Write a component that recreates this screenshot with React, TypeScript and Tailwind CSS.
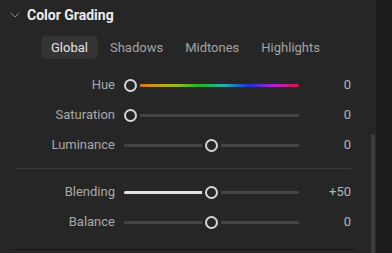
import { ChevronDown } from "lucide-react";

const HUE =
  "linear-gradient(to right, hsl(0 70% 48%), hsl(40 80% 45%), hsl(70 75% 42%), hsl(120 65% 42%), hsl(180 65% 42%), hsl(235 75% 48%), hsl(290 70% 48%), hsl(350 75% 45%))";

interface SliderProps {
  label: string;
  value: string;
  pos: number; // 0..1
  fill?: boolean;
  hue?: boolean;
}

function SliderRow({ label, value, pos, fill, hue }: SliderProps) {
  const trackW = 175;
  const center = 6.5 + pos * (trackW - 13);
  return (
    <div className="flex h-[30px] items-center">
      <div className="w-[115px] text-right text-[13px] text-[#a9a9a9]">{label}</div>
      <div className="relative ml-[9px] h-[13px] w-[175px]">
        <div
          className="absolute left-0 right-0 top-[5px] h-[3px] rounded-full bg-[#454545]"
          style={hue ? { backgroundImage: HUE } : undefined}
        />
        {fill && (
          <div
            className="absolute left-0 top-[5px] h-[3px] rounded-full bg-[#e2e2e2]"
            style={{ width: center }}
          />
        )}
        <div
          className="absolute top-0 h-[13px] w-[13px] rounded-full border-2 border-[#d6d6d6] bg-[#262626] shadow-[0_0_0_3px_#262626]"
          style={{ left: center - 6.5 }}
        />
      </div>
      <div className="w-[52px] text-right text-[13px] text-[#b4b4b4]">{value}</div>
    </div>
  );
}

export default function App() {
  return (
    <div className="flex h-[253px] w-[392px] overflow-hidden font-['Roboto',sans-serif]">
      <div className="relative flex-1 bg-[#262626]">
        {/* Header */}
        <div className="flex h-[30px] items-center pl-[7px]">
          <ChevronDown size={16} strokeWidth={1.5} className="text-[#8a8a8a]" />
          <span className="ml-[4px] text-[14px] font-bold text-[#ececec]">Color Grading</span>
        </div>

        {/* Tabs */}
        <div className="mt-[6px] flex gap-[2px] pl-[41px]">
          <div className="flex h-[23px] items-center rounded-[5px] bg-[#343434] px-[10px] text-[13px] text-[#e4e4e4]">
            Global
          </div>
          {["Shadows", "Midtones", "Highlights"].map((t) => (
            <div key={t} className="flex h-[23px] items-center px-[10px] text-[13px] text-[#a3a3a3]">
              {t}
            </div>
          ))}
        </div>

        {/* Sliders */}
        <div className="mt-[11px]">
          <SliderRow label="Hue" value="0" pos={0} hue />
          <SliderRow label="Saturation" value="0" pos={0} />
          <SliderRow label="Luminance" value="0" pos={0.5} />
        </div>

        <div className="mx-[15px] mt-[8px] h-px w-[336px] bg-[#393939]" />

        <div className="mt-[8px]">
          <SliderRow label="Blending" value="+50" pos={0.5} fill />
          <SliderRow label="Balance" value="0" pos={0.5} />
        </div>

        <div className="ml-[9px] mt-[12px] h-px w-[346px] bg-[#1a1a1a]" />

        {/* Scrollbar */}
        <div className="absolute bottom-0 right-[1px] top-[134px] w-[4px] rounded-t-full bg-[#3c3c3c]" />
      </div>
      <div className="w-4 bg-[#1c1c1c]" />
    </div>
  );
}
